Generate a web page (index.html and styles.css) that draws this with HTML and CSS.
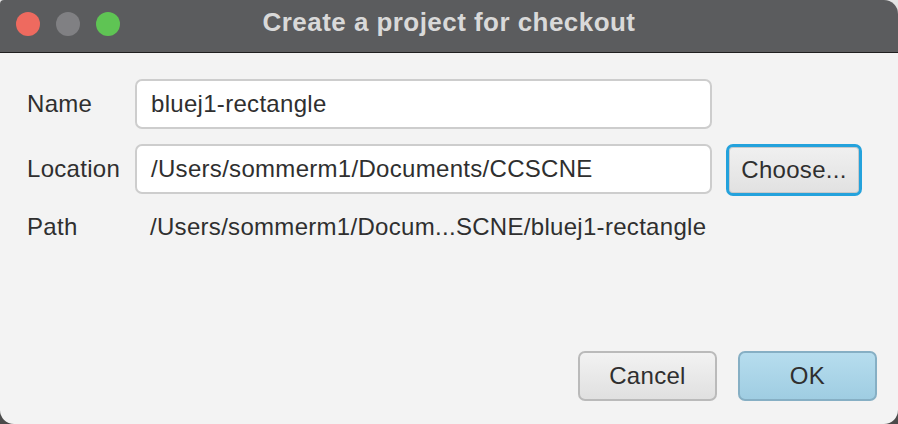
FILE: index.html
```html
<!DOCTYPE html>
<html>
<head>
<meta charset="utf-8">
<link rel="stylesheet" href="styles.css">
</head>
<body>
<div class="window">
  <div class="titlebar">
    <div class="lights">
      <span class="light red"></span>
      <span class="light gray"></span>
      <span class="light green"></span>
    </div>
    <div class="title">Create a project for checkout</div>
  </div>
  <div class="content">
    <div class="form">
      <div class="label">Name</div>
      <div class="field">bluej1-rectangle</div>
      <div></div>
      <div class="label">Location</div>
      <div class="field">/Users/sommerm1/Documents/CCSCNE</div>
      <button class="btn choose">Choose...</button>
      <div class="label">Path</div>
      <div class="value">/Users/sommerm1/Docum...SCNE/bluej1-rectangle</div>
      <div></div>
    </div>
    <div class="actions">
      <button class="btn cancel">Cancel</button>
      <button class="btn ok">OK</button>
    </div>
  </div>
</div>
</body>
</html>
```

FILE: styles.css
```css
html, body {
  margin: 0;
  padding: 0;
  width: 898px;
  height: 424px;
  overflow: hidden;
  background: linear-gradient(#e4e4e4, #4a4a4a);
  font-family: "Liberation Sans", Arial, sans-serif;
}

.window {
  width: 898px;
  height: 424px;
  box-sizing: border-box;
  background: #f3f3f3;
  border-radius: 4px 14px 14px 14px;
  overflow: hidden;
  display: flex;
  flex-direction: column;
}

.titlebar {
  height: 52px;
  background: #5b5c5e;
  border-bottom: 1px solid #1f1f1f;
  display: flex;
  align-items: center;
  justify-content: center;
  position: relative;
  flex-shrink: 0;
}

.lights {
  position: absolute;
  left: 16px;
  top: 12px;
  display: flex;
  gap: 16px;
}

.light {
  width: 24px;
  height: 24px;
  border-radius: 50%;
  display: block;
}
.red { background: #ee6a5f; }
.gray { background: #808083; }
.green { background: #5fc454; }

.title {
  color: #d9d9d9;
  font-weight: bold;
  font-size: 26px;
  letter-spacing: 0.45px;
  margin-top: -7px;
}

.content {
  flex: 1;
  display: flex;
  flex-direction: column;
  padding: 26px 21px 23px 27px;
}

.form {
  display: grid;
  grid-template-columns: 94px 577px 136px;
  grid-template-rows: 50px 50px 36px;
  column-gap: 14px;
  row-gap: 15px;
  align-items: center;
}

.label, .value, .field, .btn {
  font-size: 24px;
  letter-spacing: 0.3px;
  color: #2f2f2f;
}

.label {
  white-space: nowrap;
}

.field {
  height: 50px;
  box-sizing: border-box;
  background: #ffffff;
  border: 2px solid #cdcdcd;
  border-radius: 7px;
  padding: 0 14px;
  display: flex;
  align-items: center;
}

.value {
  padding-left: 15px;
  white-space: nowrap;
}

.btn {
  font-family: "Liberation Sans", Arial, sans-serif;
  height: 50px;
  box-sizing: border-box;
  border-radius: 7px;
  padding: 0;
  cursor: default;
}

.choose {
  height: 52px;
  margin-top: 2px;
  border: 3px solid #24a2dc;
  background: linear-gradient(#f0f0f0, #e1e1e1);
  box-shadow: inset 0 0 0 1px #c9c9c9;
}

.actions {
  margin-top: auto;
  display: flex;
  justify-content: flex-end;
  gap: 21px;
}

.cancel {
  width: 139px;
  border: 2px solid #bababa;
  background: linear-gradient(#f2f2f2, #e0e0e0);
}

.ok {
  width: 139px;
  border: 2px solid #86afc4;
  background: linear-gradient(#b6ddee, #9fcde2);
}
```
